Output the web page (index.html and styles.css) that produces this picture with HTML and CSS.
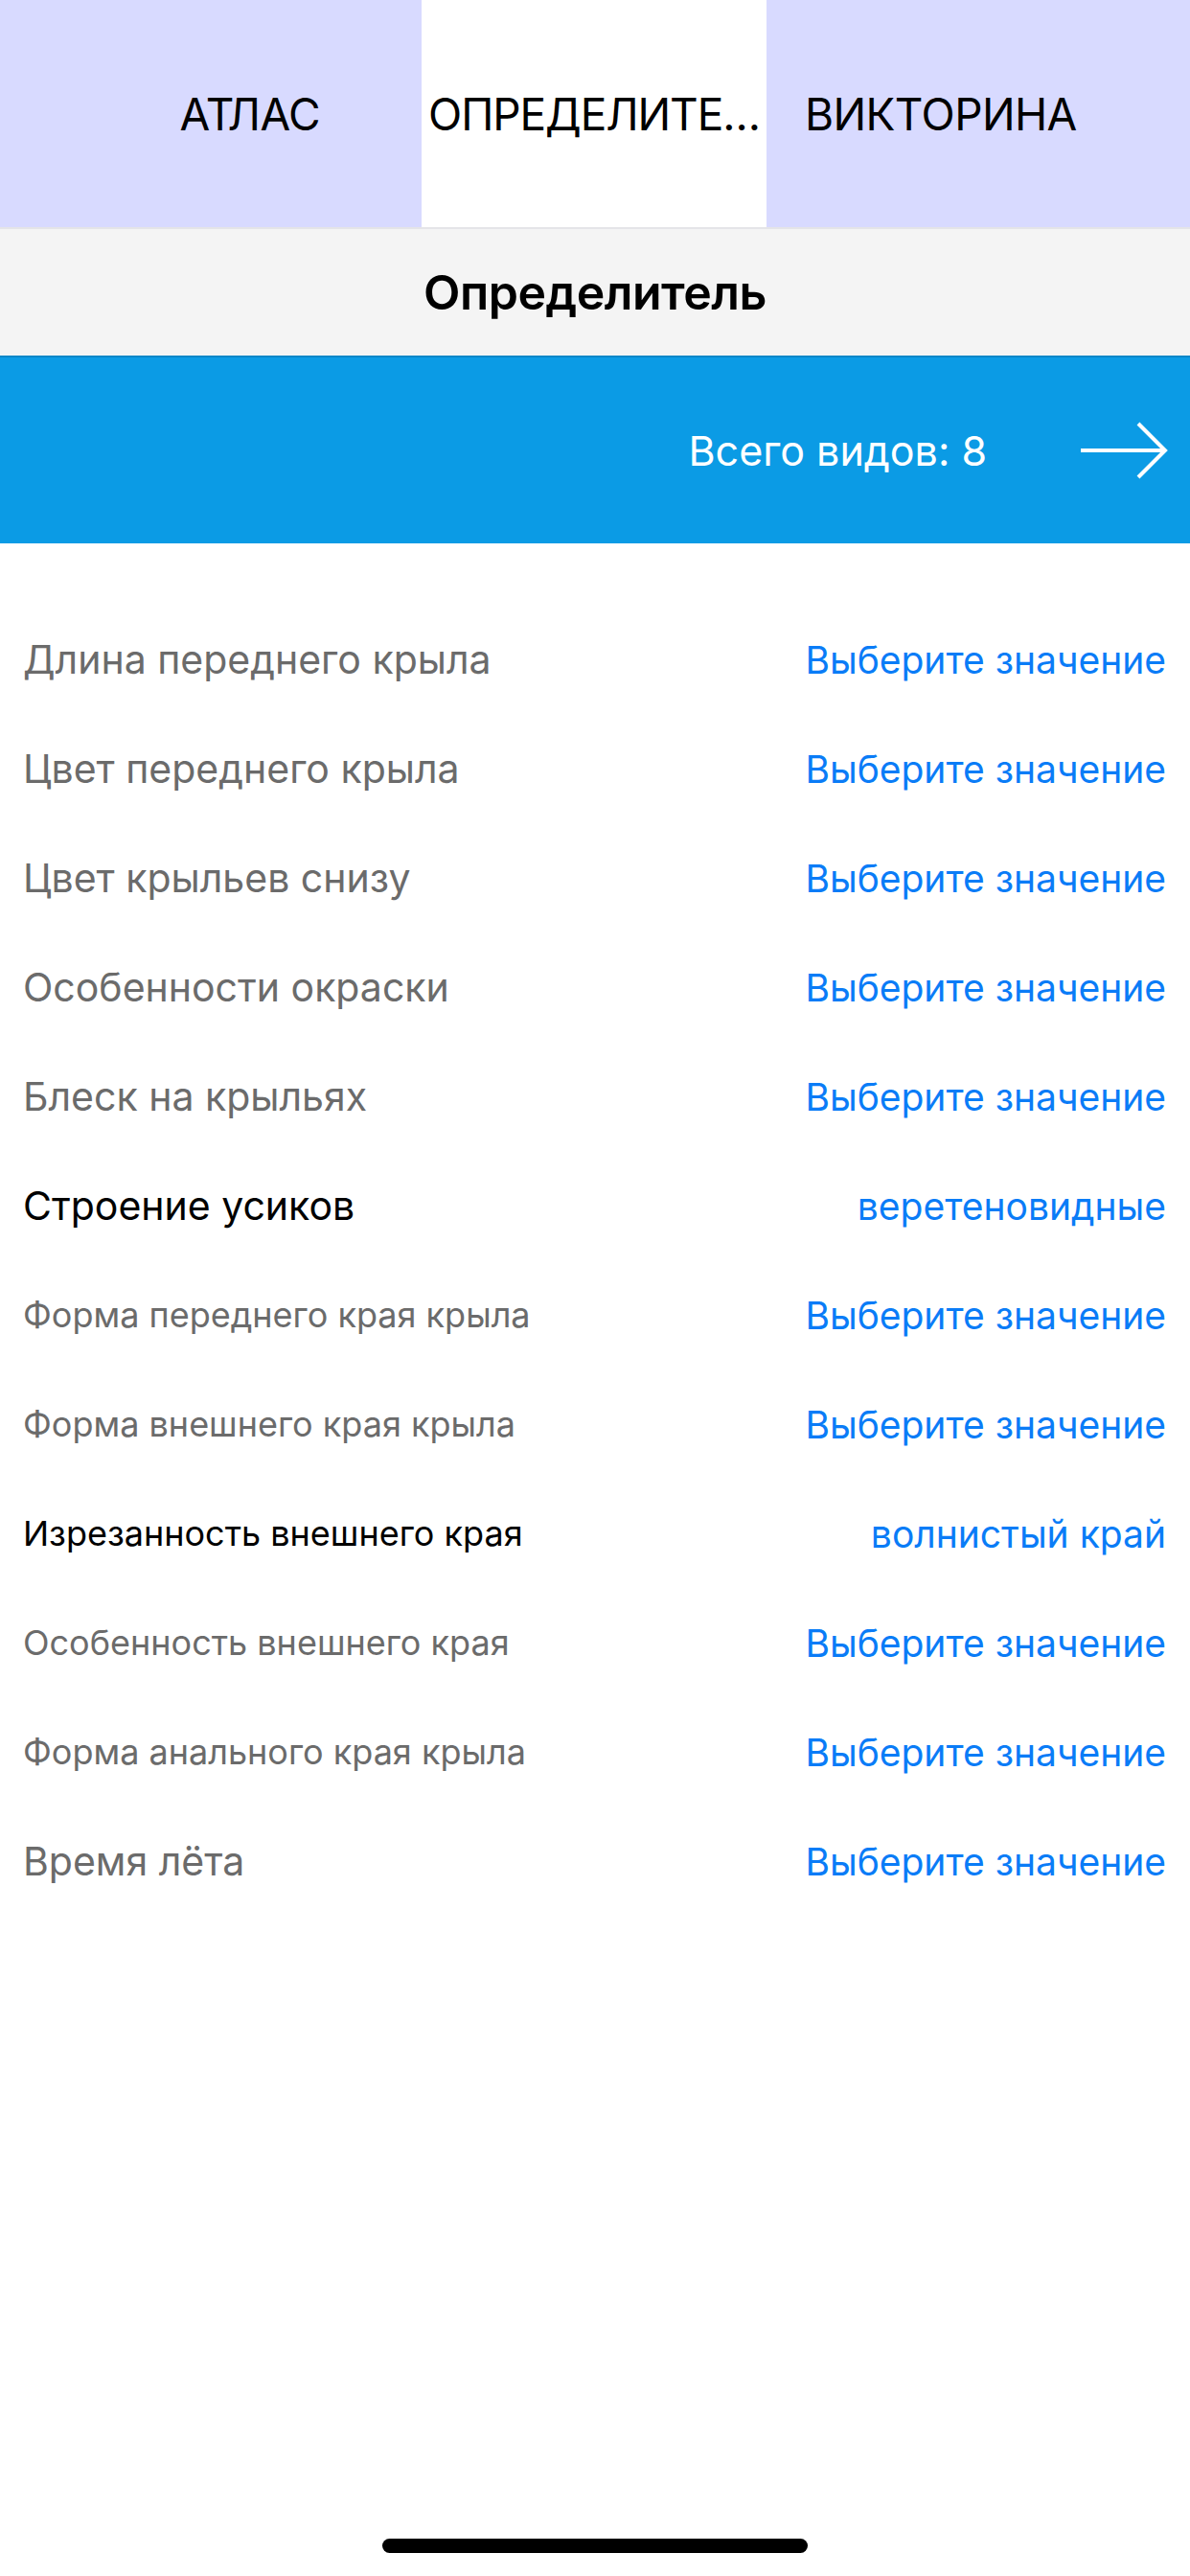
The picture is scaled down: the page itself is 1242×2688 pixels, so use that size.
FILE: index.html
```html
<!DOCTYPE html>
<html lang="ru">
<head>
    <meta charset="UTF-8">
    <meta name="viewport" content="width=device-width, initial-scale=1.0">
    <title>Определитель</title>
    <link rel="stylesheet" href="styles.css">
</head>
<body>
    <nav class="tabs">
        <div class="tab tab-left">АТЛАС</div>
        <div class="tab tab-active">ОПРЕДЕЛИТЕ…</div>
        <div class="tab tab-right">ВИКТОРИНА</div>
    </nav>
    <header class="title-bar">
        <h1>Определитель</h1>
    </header>
    <div class="summary">
        <span class="summary-text">Всего видов: 8</span>
        <svg class="arrow" width="94" height="60" viewBox="0 0 94 60">
            <line x1="2" y1="30" x2="89" y2="30" stroke="#fff" stroke-width="4"/>
            <polyline points="62,2 90,30 62,58" fill="none" stroke="#fff" stroke-width="4"/>
        </svg>
    </div>
    <div class="list">
        <div class="row"><span class="label">Длина переднего крыла</span><span class="value">Выберите значение</span></div>
        <div class="row"><span class="label">Цвет переднего крыла</span><span class="value">Выберите значение</span></div>
        <div class="row"><span class="label">Цвет крыльев снизу</span><span class="value">Выберите значение</span></div>
        <div class="row"><span class="label">Особенности окраски</span><span class="value">Выберите значение</span></div>
        <div class="row"><span class="label">Блеск на крыльях</span><span class="value">Выберите значение</span></div>
        <div class="row"><span class="label chosen">Строение усиков</span><span class="value">веретеновидные</span></div>
        <div class="row"><span class="label small">Форма переднего края крыла</span><span class="value">Выберите значение</span></div>
        <div class="row"><span class="label small">Форма внешнего края крыла</span><span class="value">Выберите значение</span></div>
        <div class="row"><span class="label small chosen">Изрезанность внешнего края</span><span class="value">волнистый край</span></div>
        <div class="row"><span class="label small">Особенность внешнего края</span><span class="value">Выберите значение</span></div>
        <div class="row"><span class="label small">Форма анального края крыла</span><span class="value">Выберите значение</span></div>
        <div class="row"><span class="label">Время лёта</span><span class="value">Выберите значение</span></div>
    </div>
    <div class="home-bar"></div>
</body>
</html>
```

FILE: styles.css
```css
body {
    font-family: Inter, "Noto Sans", sans-serif;
    background-color: #fff;
    color: #000;
    margin: 0;
    padding: 0;
    width: 1242px;
    height: 2688px;
    position: relative;
    overflow: hidden;
}
.tabs {
    display: flex;
    height: 237px;
    border-bottom: 2px solid #e4e4e8;
}
.tab {
    display: flex;
    align-items: center;
    background: #d8daff;
    font-size: 46px;
    letter-spacing: -0.6px;
    white-space: nowrap;
    box-sizing: border-box;
}
.tab-left {
    width: 440px;
    justify-content: flex-end;
    padding-right: 106px;
}
.tab-active {
    width: 360px;
    background: #fff;
    justify-content: center;
    letter-spacing: -1.1px;
}
.tab-right {
    width: 442px;
    padding-left: 40px;
}
.title-bar {
    height: 132px;
    background: #f4f4f4;
    display: flex;
    align-items: center;
    justify-content: center;
    border-bottom: 2px solid #0a87c8;
}
.title-bar h1 {
    margin: 0;
    font-size: 50px;
    font-weight: 600;
    letter-spacing: -0.5px;
}
.summary {
    height: 194px;
    background: #0b9be5;
    display: flex;
    align-items: center;
    justify-content: flex-end;
    padding-right: 22px;
    color: #fff;
}
.summary-text {
    font-size: 43px;
    margin-right: 96px;
}
.arrow {
    display: block;
}
.list {
    padding-top: 64px;
}
.row {
    height: 114px;
    display: flex;
    align-items: center;
    justify-content: space-between;
    padding: 0 25px 0 24px;
}
.label {
    font-size: 41px;
    color: #6b6b6b;
}
.label.small {
    font-size: 36px;
}
.label.chosen {
    color: #000;
}
.value {
    font-size: 39px;
    color: #0a7cf7;
}
.home-bar {
    position: absolute;
    left: 399px;
    top: 2649px;
    width: 444px;
    height: 15px;
    border-radius: 8px;
    background: #000;
}
```
